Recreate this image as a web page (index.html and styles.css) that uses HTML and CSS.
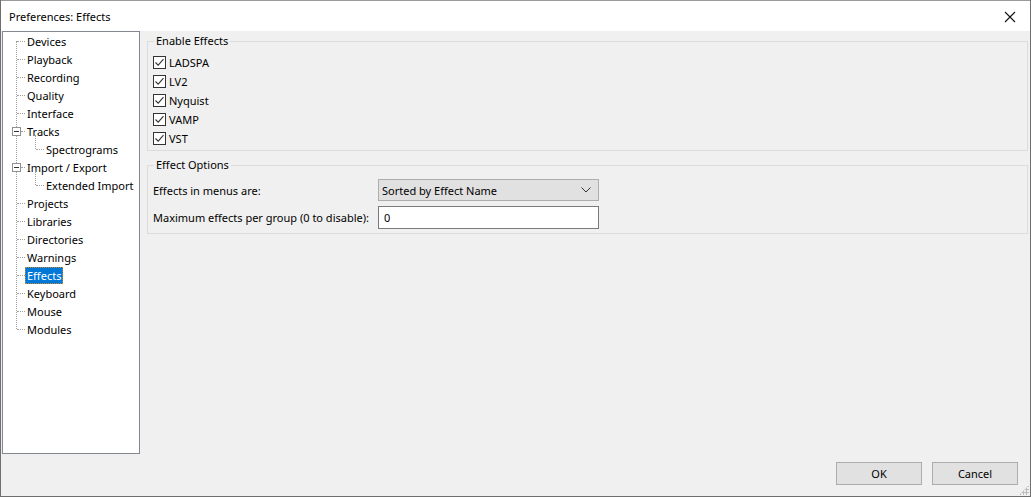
FILE: index.html
```html
<!DOCTYPE html>
<html>
<head>
<meta charset="utf-8">
<link rel="stylesheet" href="styles.css">
</head>
<body>
<div class="window">
  <div class="titlebar">
    <span class="title">Preferences: Effects</span>
    <svg class="close" width="12" height="12" viewBox="0 0 12 12"><path d="M1 1 L11 11 M11 1 L1 11" stroke="#111" stroke-width="1.1" fill="none"/></svg>
  </div>
  <div class="body">
    <div class="main">
      <div class="tree">
        <div class="vline"></div>
        <div class="item"><span class="hl"></span><span class="lbl">Devices</span></div>
        <div class="item"><span class="hl"></span><span class="lbl">Playback</span></div>
        <div class="item"><span class="hl"></span><span class="lbl">Recording</span></div>
        <div class="item"><span class="hl"></span><span class="lbl">Quality</span></div>
        <div class="item"><span class="hl"></span><span class="lbl">Interface</span></div>
        <div class="item"><svg class="box" width="9" height="9" viewBox="0 0 9 9"><rect x="0.5" y="0.5" width="8" height="8" fill="#fff" stroke="#919191"/><path d="M2 4.5 H7" stroke="#333"/></svg><span class="hl short"></span><span class="lbl">Tracks</span></div>
        <div class="item sub"><span class="vsub"></span><span class="hl"></span><span class="lbl">Spectrograms</span></div>
        <div class="item"><svg class="box" width="9" height="9" viewBox="0 0 9 9"><rect x="0.5" y="0.5" width="8" height="8" fill="#fff" stroke="#919191"/><path d="M2 4.5 H7" stroke="#333"/></svg><span class="hl short"></span><span class="lbl">Import / Export</span></div>
        <div class="item sub"><span class="vsub"></span><span class="hl"></span><span class="lbl">Extended Import</span></div>
        <div class="item"><span class="hl"></span><span class="lbl">Projects</span></div>
        <div class="item"><span class="hl"></span><span class="lbl">Libraries</span></div>
        <div class="item"><span class="hl"></span><span class="lbl">Directories</span></div>
        <div class="item"><span class="hl"></span><span class="lbl">Warnings</span></div>
        <div class="item"><span class="hl"></span><span class="lbl selected">Effects</span></div>
        <div class="item"><span class="hl"></span><span class="lbl">Keyboard</span></div>
        <div class="item"><span class="hl"></span><span class="lbl">Mouse</span></div>
        <div class="item last"><span class="hl"></span><span class="lbl">Modules</span></div>
      </div>
      <div class="panel">
        <fieldset class="group g1">
          <legend>Enable Effects</legend>
          <label class="check"><span class="cb"><svg width="11" height="11" viewBox="0 0 11 11"><path d="M1.5 5.5 L4.2 8.2 L9.5 2.2" stroke="#333" stroke-width="1.1" fill="none"/></svg></span>LADSPA</label>
          <label class="check"><span class="cb"><svg width="11" height="11" viewBox="0 0 11 11"><path d="M1.5 5.5 L4.2 8.2 L9.5 2.2" stroke="#333" stroke-width="1.1" fill="none"/></svg></span>LV2</label>
          <label class="check"><span class="cb"><svg width="11" height="11" viewBox="0 0 11 11"><path d="M1.5 5.5 L4.2 8.2 L9.5 2.2" stroke="#333" stroke-width="1.1" fill="none"/></svg></span>Nyquist</label>
          <label class="check"><span class="cb"><svg width="11" height="11" viewBox="0 0 11 11"><path d="M1.5 5.5 L4.2 8.2 L9.5 2.2" stroke="#333" stroke-width="1.1" fill="none"/></svg></span>VAMP</label>
          <label class="check"><span class="cb"><svg width="11" height="11" viewBox="0 0 11 11"><path d="M1.5 5.5 L4.2 8.2 L9.5 2.2" stroke="#333" stroke-width="1.1" fill="none"/></svg></span>VST</label>
        </fieldset>
        <fieldset class="group g2">
          <legend>Effect Options</legend>
          <div class="opts">
            <span class="optlbl">Effects in menus are:</span>
            <div class="select"><span>Sorted by Effect Name</span><svg width="10" height="6" viewBox="0 0 10 6"><path d="M0.5 0.5 L5 5 L9.5 0.5" stroke="#333" stroke-width="1" fill="none"/></svg></div>
            <span class="optlbl">Maximum effects per group (0 to disable):</span>
            <div class="input">0</div>
          </div>
        </fieldset>
      </div>
    </div>
    <div class="footer">
      <button class="btn">OK</button>
      <button class="btn">Cancel</button>
      <span class="grip"></span>
    </div>
  </div>
</div>
</body>
</html>
```
FILE: styles.css
```css
* { box-sizing: border-box; }
html, body { margin: 0; padding: 0; }
body {
  width: 1031px; height: 497px; overflow: hidden;
  font-family: "Noto Sans", "Liberation Sans", sans-serif;
  font-size: 11px; color: #000; background: #fff;
}
.window {
  width: 1031px; height: 497px;
  border: 1px solid #6e6e6e; border-top: none;
  display: flex; flex-direction: column;
  background: #f0f0f0;
}
.titlebar {
  height: 31px; background: #fff;
  display: flex; align-items: center; justify-content: space-between;
  padding: 0 14px 0 8px;
  border-top: 1px solid #9a9a9a;
}
.title { font-size: 11px; padding-top: 1px; }
.close { margin-top: 1px; }
.body { flex: 1; display: flex; flex-direction: column; }
.main { display: flex; height: 423px; }
.tree {
  position: relative;
  width: 138px; margin-left: 1px;
  background: #fff; border: 1px solid #828790;
  padding-top: 0;
}
.vline {
  position: absolute; left: 13px; top: 9px; height: 288px;
  border-left: 1px dotted #a0a0a0;
}
.item {
  height: 18px; display: flex; align-items: center; position: relative;
  padding-left: 22px;
}
.item.sub { padding-left: 41px; }
.hl {
  position: absolute; left: 14px; top: 9px; width: 8px;
  border-top: 1px dotted #a0a0a0;
}
.hl.short { left: 18px; width: 4px; }
.sub .hl { left: 33px; width: 8px; }
.vsub {
  position: absolute; left: 32px; top: -5px; height: 14px;
  border-left: 1px dotted #a0a0a0;
}
.box { position: absolute; left: 9px; top: 5px; }
.lbl { padding: 0 2px; line-height: 17px; height: 17px; white-space: nowrap; }
.lbl.selected { background: #0078d7; color: #fff; outline: 1px dotted #d08a2a; outline-offset: -1px; }
.panel { flex: 1; padding: 3px 2px 0 7px; display: flex; flex-direction: column; }
.group {
  margin: 0; border: 1px solid #dcdcdc; border-radius: 0;
  padding: 0 5px;
}
legend { padding: 0 2px; margin-left: 1px; font-size: 11px; line-height: 14px; }
.g1 { height: 117px; padding-top: 5px; }
.g2 { margin-top: 7px; height: 76px; padding-top: 7px; }
.check { display: flex; align-items: center; height: 19px; }
.cb {
  width: 13px; height: 13px; border: 1px solid #333; background: #fff;
  display: inline-flex; align-items: center; justify-content: center;
  margin-right: 3px;
}
.opts { display: grid; grid-template-columns: 225px 221px; row-gap: 5px; align-items: center; }
.optlbl { white-space: nowrap; }
.select {
  height: 22px; background: #e1e1e1; border: 1px solid #adadad;
  display: flex; align-items: center; justify-content: space-between;
  padding: 0 7px 0 3px;
}
.input {
  height: 23px; background: #fff; border: 1px solid #7a7a7a;
  display: flex; align-items: center; padding-left: 5px;
}
.footer {
  flex: 1; display: flex; justify-content: flex-end; align-items: flex-start;
  gap: 10px; padding: 8px 12px 0 0; position: relative;
}
.btn {
  width: 86px; height: 23px; background: #e1e1e1; border: 1px solid #adadad;
  font-family: inherit; font-size: 11px; color: #000; padding: 0;
}
.grip {
  position: absolute; right: 1px; bottom: 1px; width: 10px; height: 10px;
  background-image: radial-gradient(circle, #bcbcbc 1px, transparent 1.2px);
  background-size: 3px 3px;
  clip-path: polygon(100% 0, 100% 100%, 0 100%);
}
```
